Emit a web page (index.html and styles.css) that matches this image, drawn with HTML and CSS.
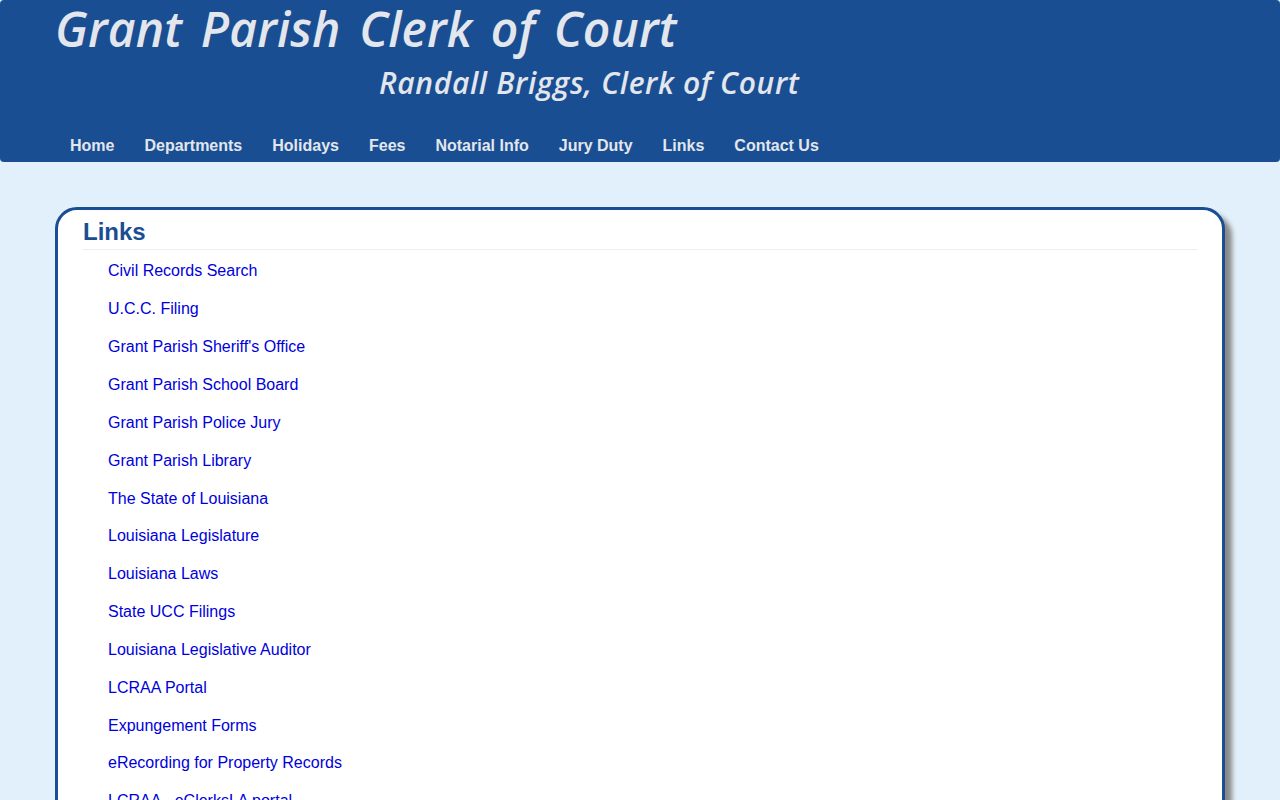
FILE: index.html
```html
<!DOCTYPE html>
<html lang="en">
<head>
<meta charset="utf-8">
<title>Grant Parish Clerk of Court - Links</title>
<link rel="stylesheet" href="styles.css">
</head>
<body>
<header class="site-header">
  <div class="brand-title">Grant Parish Clerk of Court</div>
  <div class="brand-sub">Randall Briggs, Clerk of Court</div>
  <nav class="nav">
    <a href="#">Home</a>
    <a href="#">Departments</a>
    <a href="#">Holidays</a>
    <a href="#">Fees</a>
    <a href="#">Notarial Info</a>
    <a href="#">Jury Duty</a>
    <a href="#">Links</a>
    <a href="#">Contact Us</a>
  </nav>
</header>
<main class="card">
  <h2 class="card-title">Links</h2>
  <ul class="link-list">
    <li><a href="#">Civil Records Search</a></li>
    <li><a href="#">U.C.C. Filing</a></li>
    <li><a href="#">Grant Parish Sheriff's Office</a></li>
    <li><a href="#">Grant Parish School Board</a></li>
    <li><a href="#">Grant Parish Police Jury</a></li>
    <li><a href="#">Grant Parish Library</a></li>
    <li><a href="#">The State of Louisiana</a></li>
    <li><a href="#">Louisiana Legislature</a></li>
    <li><a href="#">Louisiana Laws</a></li>
    <li><a href="#">State UCC Filings</a></li>
    <li><a href="#">Louisiana Legislative Auditor</a></li>
    <li><a href="#">LCRAA Portal</a></li>
    <li><a href="#">Expungement Forms</a></li>
    <li><a href="#">eRecording for Property Records</a></li>
    <li><a href="#">LCRAA - eClerksLA portal</a></li>
  </ul>
</main>
</body>
</html>
```
FILE: styles.css
```css
* { box-sizing: border-box; }
html, body { margin: 0; padding: 0; }
body {
  background: #e1f0fa;
  font-family: "Liberation Sans", Arial, sans-serif;
  font-size: 16px;
  line-height: 1.42857;
  height: 800px;
  overflow: hidden;
}
.site-header {
  background: #1a4e93;
  height: 162px;
  border-radius: 4px;
  padding: 0 55px;
  display: flex;
  flex-direction: column;
  color: #e3e6ec;
}
.brand-title {
  font-family: "Open Sans", sans-serif;
  font-style: italic;
  font-weight: 600;
  font-size: 48px;
  line-height: 58px;
  letter-spacing: 0.15px;
  word-spacing: 6px;
  white-space: nowrap;
}
.brand-sub {
  font-family: "Open Sans", sans-serif;
  font-style: italic;
  font-weight: 600;
  font-size: 30px;
  line-height: 50px;
  letter-spacing: 0.63px;
  margin-left: 324px;
  white-space: nowrap;
}
.nav {
  display: flex;
  margin-top: auto;
}
.nav a {
  padding: 7px 15px 4px;
  font-weight: bold;
  color: #e3e6ec;
  text-decoration: none;
}
.card {
  margin: 45px 55px 0;
  background: #fff;
  border: 3px solid #1a4e93;
  border-radius: 22px;
  box-shadow: 7px 7px 5px #888;
  padding: 0 25px;
  height: 800px;
}
.card-title {
  margin: 7px 0 0;
  padding: 0 0 2px;
  font-size: 24px;
  line-height: 30px;
  font-weight: bold;
  color: #1a4e93;
  border-bottom: 1px solid #eee;
}
.link-list {
  list-style: none;
  margin: 10.46px 0 0;
  padding: 0 0 0 25px;
}
.link-list li { margin-bottom: 15px; }
.link-list a { color: #0000dd; text-decoration: none; }
```
